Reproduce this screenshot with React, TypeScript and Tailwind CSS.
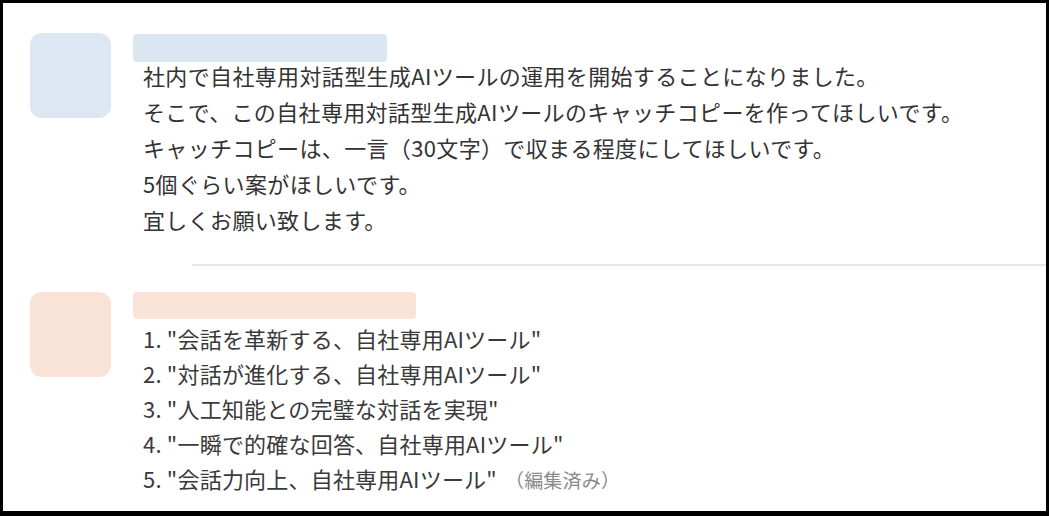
const request = [
  "社内で自社専用対話型生成AIツールの運用を開始することになりました。",
  "そこで、この自社専用対話型生成AIツールのキャッチコピーを作ってほしいです。",
  "キャッチコピーは、一言（30文字）で収まる程度にしてほしいです。",
  "5個ぐらい案がほしいです。",
  "宜しくお願い致します。",
];

const answers = [
  '1. "会話を革新する、自社専用AIツール"',
  '2. "対話が進化する、自社専用AIツール"',
  '3. "人工知能との完璧な対話を実現"',
  '4. "一瞬で的確な回答、自社専用AIツール"',
  '5. "会話力向上、自社専用AIツール"',
];

export default function App() {
  return (
    <div className="w-[1049px] h-[516px] overflow-hidden border-[3px] border-b-[5px] border-black bg-white font-['Noto_Sans_CJK_JP','Noto_Sans',sans-serif] text-[#333] [text-spacing-trim:space-all]">
      {/* user message */}
      <div className="flex gap-[22px] pl-[27px] pt-[30px]">
        <div className="w-[81px] h-[85px] shrink-0 rounded-[12px] bg-[#dce7f3]" />
        <div className="pt-px">
          <div className="w-[254px] h-[28px] rounded-[4px] bg-[#dbe6f3]" />
          <div className="-mt-[5px] pl-[10px] text-[22px] leading-[36px] tracking-[0.35px]">
            {request.map((line, i) => (
              <div key={i}>{line}</div>
            ))}
          </div>
        </div>
      </div>

      <div className="ml-[189px] mt-[27px] h-[2px] bg-[#e6e6e6]" />

      {/* assistant message */}
      <div className="flex gap-[22px] pl-[27px] pt-[26px]">
        <div className="w-[81px] h-[85px] shrink-0 rounded-[12px] bg-[#f9e3d6]" />
        <div>
          <div className="w-[283px] h-[27px] rounded-[4px] bg-[#fae3d7]" />
          <div className="mt-[2px] pl-[10px] text-[22px] leading-[35px] tracking-[0.2px] text-[#3a3a3a]">
            {answers.map((line, i) => (
              <div key={i}>
                {line}
                {i === answers.length - 1 && (
                  <span className="ml-[8px] text-[19px] text-[#8a8a8a]">（編集済み）</span>
                )}
              </div>
            ))}
          </div>
        </div>
      </div>
    </div>
  );
}
